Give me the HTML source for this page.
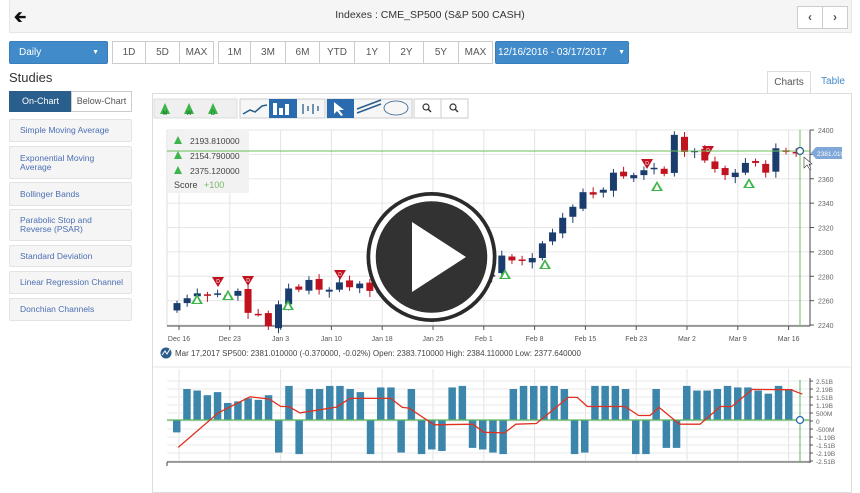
<!DOCTYPE html>
<html><head><meta charset="utf-8"><style>
*{box-sizing:border-box;margin:0;padding:0}
body{width:860px;height:482px;overflow:hidden;background:#fff;font-family:"Liberation Sans",sans-serif;position:relative;color:#333}
.abs{position:absolute}
.top{left:9px;top:0;width:843px;height:33px;background:#f5f5f5;border:1px solid #e6e6e6;border-top:none}
.btn{position:absolute;height:23px;border:1px solid #ccc;background:#fff;font-size:10px;color:#555;text-align:center;line-height:21px}
.blue{background:#428bca;color:#fff;border-color:#3a7dbb}
.study{position:absolute;left:9px;width:123px;background:#f5f5f5;border:1px solid #e3e3e3;border-radius:2px;font-size:8.5px;color:#4b6fb3;padding-left:10px;display:flex;align-items:center;line-height:9px}
</style></head><body>
<div class="abs top"></div>
<div class="abs" style="left:14px;top:7px;font-size:15px;font-weight:bold;color:#111">&#129136;</div>
<div class="abs" style="left:0;width:860px;top:9px;text-align:center;font-size:10.5px;color:#333">Indexes : CME_SP500 (S&amp;P 500 CASH)</div>
<div class="btn" style="left:797px;top:6px;width:26px;font-weight:bold;font-size:12px">&#8249;</div>
<div class="btn" style="left:822px;top:6px;width:26px;font-weight:bold;font-size:12px">&#8250;</div>

<div class="btn blue" style="left:9px;top:41px;width:99px;text-align:left;padding-left:9px;border-radius:2px">Daily<span style="position:absolute;right:8px;font-size:7px">&#9660;</span></div>
<div class="btn" style="left:112px;top:41px;width:34px">1D</div>
<div class="btn" style="left:145px;top:41px;width:35px">5D</div>
<div class="btn" style="left:179px;top:41px;width:35px">MAX</div>
<div class="btn" style="left:218px;top:41px;width:33px">1M</div>
<div class="btn" style="left:250px;top:41px;width:36px">3M</div>
<div class="btn" style="left:285px;top:41px;width:35px">6M</div>
<div class="btn" style="left:319px;top:41px;width:36px">YTD</div>
<div class="btn" style="left:354px;top:41px;width:36px">1Y</div>
<div class="btn" style="left:389px;top:41px;width:35px">2Y</div>
<div class="btn" style="left:423px;top:41px;width:36px">5Y</div>
<div class="btn" style="left:458px;top:41px;width:35px">MAX</div>
<div class="btn blue" style="left:495px;top:41px;width:134px;text-align:left;padding-left:2px;border-radius:2px">12/16/2016 - 03/17/2017<span style="position:absolute;right:3px;font-size:7px">&#9660;</span></div>

<div class="abs" style="left:9px;top:70px;font-size:13px;color:#333">Studies</div>
<div class="btn" style="left:9px;top:91px;width:63px;height:21px;line-height:19px;background:#2a5e8d;color:#fff;border-color:#2a5e8d;font-size:9px">On-Chart</div>
<div class="btn" style="left:71px;top:91px;width:61px;height:21px;line-height:19px;font-size:9px">Below-Chart</div>
<div class="study" style="top:119px;height:23px">Simple Moving Average</div>
<div class="study" style="top:146px;height:33px">Exponential Moving<br>Average</div>
<div class="study" style="top:182px;height:24px">Bollinger Bands</div>
<div class="study" style="top:209px;height:32px">Parabolic Stop and<br>Reverse (PSAR)</div>
<div class="study" style="top:245px;height:22px">Standard Deviation</div>
<div class="study" style="top:271px;height:23px">Linear Regression Channel</div>
<div class="study" style="top:298px;height:23px">Donchian Channels</div>

<div class="abs" style="left:767px;top:71px;width:44px;height:23px;border:1px solid #ddd;border-bottom:1px solid #fff;background:#fff;font-size:10px;text-align:center;line-height:21px;color:#555">Charts</div>
<div class="abs" style="left:813px;top:71px;width:40px;height:23px;font-size:10px;text-align:center;line-height:21px;color:#428bca">Table</div>
<div class="abs" style="left:152px;top:93px;width:700px;height:400px;border:1px solid #ddd"></div>

<svg class="abs" style="left:0;top:0" width="860" height="482" id="s"></svg>
<script>
var s='';
function R(x,y,w,h,f,st){s+='<rect x="'+x+'" y="'+y+'" width="'+w+'" height="'+h+'" fill="'+f+'"'+(st?' stroke="'+st+'"':'')+'/>';}
function L(x1,y1,x2,y2,c,w){s+='<line x1="'+x1+'" y1="'+y1+'" x2="'+x2+'" y2="'+y2+'" stroke="'+c+'" stroke-width="'+(w||1)+'"/>';}
function T(x,y,t,sz,c,a){s+='<text x="'+x+'" y="'+y+'" font-size="'+sz+'" fill="'+c+'"'+(a?' text-anchor="'+a+'"':'')+' font-family="Liberation Sans">'+t+'</text>';}
R(154,99,83,19,'#efefef','#ddd');
['M','W','D'].forEach(function(l,i){var x=165+i*24;s+='<polygon points="'+x+',103 '+(x-5)+',114 '+(x+5)+',114" fill="#3cb54a"/>';T(x,115,l,6,'#1a6e22','middle');});
R(240,99,85,19,'#f6f6f6','#ccc');R(269,99,28,19,'#2a6bb0');
s+='<polyline points="243,114 250,110 255,112 262,106 267,105" fill="none" stroke="#2a5e8d" stroke-width="1.5"/>';
R(273,103,4,12,'#fff');R(279,108,4,7,'#fff');R(285,104,4,11,'#fff');
for(var i=0;i<4;i++)L(303+i*5,114-i%2*3,303+i*5,104+i%2*2,'#2a5e8d',1.3);
R(327,99,85,19,'#f6f6f6','#ccc');R(327,99,27,19,'#2a6bb0');
s+='<polygon points="334,102 334,114 337,111 341,116 343,115 339,110 344,110" fill="#fff"/>';
L(357,113,381,104,'#2a5e8d',1.5);L(357,109,381,100,'#2a5e8d',1.5);
s+='<ellipse cx="396" cy="108" rx="12" ry="7" fill="none" stroke="#2a5e8d" stroke-width="0.8"/>';
R(414,99,54,19,'#fff','#ccc');L(441,99,441,118,'#ccc');
s+='<circle cx="426" cy="107" r="3" fill="none" stroke="#333" stroke-width="1.2"/><line x1="428" y1="109" x2="431" y2="112" stroke="#333" stroke-width="1.5"/>';
s+='<circle cx="453" cy="107" r="3" fill="none" stroke="#333" stroke-width="1.2"/><line x1="455" y1="109" x2="458" y2="112" stroke="#333" stroke-width="1.5"/>';
var y=function(p){return 130+(2400-p)*1.219;};
var dates=['Dec 16','Dec 23','Jan 3','Jan 10','Jan 18','Jan 25','Feb 1','Feb 8','Feb 15','Feb 23','Mar 2','Mar 9','Mar 16'];
for(var p=2240;p<=2400;p+=20){L(167,y(p),810,y(p),'#e6e6e6');L(810,y(p),814,y(p),'#555');T(818,y(p)+3,p,7,'#666');}
dates.forEach(function(d,i){var x=179+i*50.8;L(x,130,x,326,'#e3e3e3');L(x,326,x,330,'#555');L(x,369,x,462,'#e3e3e3');T(x,341,d,7,'#555','middle');});
L(167,130,167,326,'#ddd');L(167,326,810,326,'#444');L(810,130,810,326,'#444');
R(168,131,81,62,'#f2f2f2');
[[142,'2193.810000'],[157,'2154.790000'],[172,'2375.120000']].forEach(function(a,i){s+='<polygon points="178,'+(a[0]-6)+' 174,'+(a[0]+2)+' 182,'+(a[0]+2)+'" fill="#3cb54a"/>';T(190,a[0]+2,a[1],8.5,'#444');});
T(174,188,'Score',9,'#444');T(204,188,'+100',9,'#7ab76a');
var c=[2258,2262,2266,2264,2266,2264,2268,2250,2249,2239,2257,2270,2269,2277,2269,2269,2275,2271,2274,2268,2271,2264,2272,2265,2280,2298,2296,2295,2281,2279,2280,2281,2297,2293,2293,2295,2307,2316,2328,2337,2349,2347,2351,2365,2362,2363,2367,2369,2364,2396,2382,2383,2375,2368,2363,2365,2373,2373,2365,2385,2382,2381];
for(var i=0;i<c.length;i++){var x=177+i*10.15,op=i?c[i-1]+((i*7)%5-2)*0.8:2252,cl=c[i],isUp=cl>op,col=isUp?'#1b3d6d':'#c1121f';
var hi=Math.max(op,cl)+2+(i%3),lo=Math.min(op,cl)-2-(i*5%4);L(x,y(hi),x,y(lo),col,1);
var t=y(Math.max(op,cl)),b=y(Math.min(op,cl));R(x-3.5,t,7,Math.max(b-t,1.5),col);}
function upM(x,yy){s+='<polygon points="'+x+','+yy+' '+(x-6)+','+(yy+10)+' '+(x+6)+','+(yy+10)+'" fill="#3cb54a"/><polygon points="'+x+','+(yy+3)+' '+(x-3)+','+(yy+9)+' '+(x+3)+','+(yy+9)+'" fill="#fff"/>';}
function dnM(x,yy){s+='<polygon points="'+(x-6)+','+yy+' '+(x+6)+','+yy+' '+x+','+(yy+10)+'" fill="#c1121f"/>';T(x,yy+6,'D',5,'#fff','middle');}
[[197,294],[228,290],[288,300],[401,289],[413,289],[423,289],[505,269],[545,259],[657,181],[749,178]].forEach(function(a){upM(a[0],a[1]);});
[[218,277],[248,276],[340,270],[386,272],[462,263],[647,159],[708,146]].forEach(function(a){dnM(a[0],a[1]);});
L(167,151,810,151,'#6cbf5a');L(800,130,800,326,'#6cbf5a');
s+='<circle cx="800" cy="151" r="3.5" fill="#fff" stroke="#2a5e8d" stroke-width="1.3"/>';
s+='<polygon points="811,153 816,147 842,147 842,159 816,159" fill="#7fa7d8"/>';T(817,156,'2381.0100',6.5,'#fff');
s+='<polygon points="804,157 804,168 807,165 810,170 811,169 809,164 812,164" fill="#fff" stroke="#333" stroke-width="0.6"/>';
s+='<circle cx="166" cy="353" r="5.5" fill="#2a5e8d"/><polyline points="162,355 165,351 167,354 170,349" fill="none" stroke="#fff" stroke-width="1"/>';
T(175,356,'Mar 17,2017 SP500: 2381.010000 (-0.370000, -0.02%) Open: 2383.710000 High: 2384.110000 Low: 2377.640000',8,'#444');
L(153,367,851,367,'#e6e6e6');
var vl=['2.51B','2.19B','1.51B','1.19B','500M','0','-500M','-1.19B','-1.51B','-2.19B','-2.51B'];
vl.forEach(function(t,i){var yy=381+i*8;L(167,yy,810,yy,'#eaeaea');L(810,yy,813,yy,'#555');T(816,yy+3,t,6.5,'#666');});
L(810,378,810,463,'#444');L(167,462,810,462,'#444');L(167,462,167,466,'#444');
var v=[-0.8,2.0,1.9,1.6,1.8,1.1,1.2,1.4,1.3,1.6,-2.1,2.2,-2.2,2.0,2.0,2.2,2.2,2.0,1.8,-2.2,2.1,2.1,-2.1,2.0,-2.2,-1.9,-2.0,2.1,2.2,-1.8,-1.9,-2.1,-2.2,2.0,2.2,2.2,2.2,2.2,2.0,-2.2,-2.1,2.2,2.2,2.2,2.0,-2.2,-2.2,2.0,-1.8,-1.8,2.2,1.9,1.9,2.0,2.2,2.1,2.1,1.9,1.7,2.2,2.0];
for(var i=0;i<v.length;i++){var x=173+i*10.2,h=v[i]*15.5;R(x,h>0?420-h:420,7.5,Math.abs(h),'#3d86ab');}
L(167,420,810,420,'#5cb85c',1.3);L(800,380,800,462,'#5cb85c');
var lp=[[62,357],[150,250],[220,200],[262,207],[288,230],[305,230],[330,250],[410,232],[440,205],[530,205],[555,233],[570,235],[625,287],[710,285],[735,310],[780,312],[805,285],[850,283],[920,202],[940,202],[962,230],[1045,230],[1075,258],[1100,258],[1120,233],[1165,285],[1210,285],[1255,230],[1280,230],[1325,177],[1410,178],[1435,192]];
s+='<polyline fill="none" stroke="#e0301e" stroke-width="1.3" points="'+lp.map(function(p){return (150+p[0]/2.2).toFixed(1)+','+(420+(p[1]-272)/3.1).toFixed(1);}).join(' ')+'"/>';
s+='<circle cx="800" cy="420" r="3.5" fill="#fff" stroke="#2a6bb0" stroke-width="1.3"/>';
s+='<circle cx="431.5" cy="257" r="65" fill="#2b2b2b"/><circle cx="431.5" cy="257" r="58.5" fill="none" stroke="#fff" stroke-width="5.5"/><circle cx="431.5" cy="257" r="55.5" fill="#333" fill-opacity="0.97"/>';
s+='<polygon points="412,222 412,292 466,257" fill="#fff"/>';
document.getElementById('s').innerHTML=s;
</script>
</body></html>
